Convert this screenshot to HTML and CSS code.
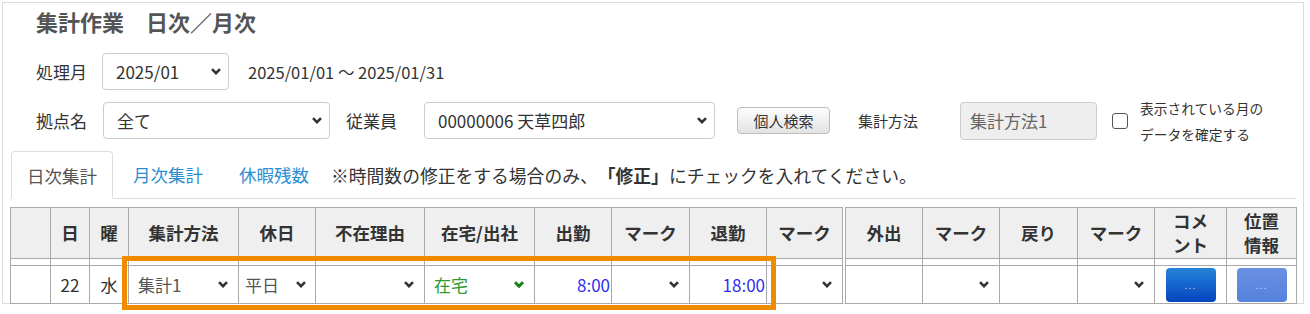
FILE: index.html
```html
<!DOCTYPE html>
<html lang="ja">

<head>
  <meta charset="UTF-8" />
  <meta name="viewport" content="width=device-width, initial-scale=1.0" />
  <title>集計作業 日次／月次</title>
  <link rel="stylesheet" href="styles.css">
</head>

<body>
  <div class="panel">

    <h1 class="page-title">集計作業　日次／月次</h1>

    <div class="form-row form-row-month">
      <span class="label label-month">処理月</span>
      <div class="select select-month">
        <span>2025/01</span>
        <svg class="chevron" viewBox="0 0 10 7"><polyline points="1,1.2 5,5.2 9,1.2" /></svg>
      </div>
      <span class="range">2025/01/01 ～ 2025/01/31</span>
    </div>

    <div class="form-row form-row-filter">
      <span class="label label-base">拠点名</span>
      <div class="select select-base">
        <span>全て</span>
        <svg class="chevron" viewBox="0 0 10 7"><polyline points="1,1.2 5,5.2 9,1.2" /></svg>
      </div>
      <span class="label label-staff">従業員</span>
      <div class="select select-staff">
        <span>00000006 天草四郎</span>
        <svg class="chevron" viewBox="0 0 10 7"><polyline points="1,1.2 5,5.2 9,1.2" /></svg>
      </div>
      <button class="search-button">個人検索</button>
      <span class="label label-method">集計方法</span>
      <div class="readonly-box">集計方法1</div>
      <span class="checkbox"></span>
      <span class="confirm-text">表示されている月の<br>データを確定する</span>
    </div>

    <div class="tabs">
      <span class="tab tab-active">日次集計</span>
      <span class="tab">月次集計</span>
      <span class="tab">休暇残数</span>
      <span class="note">※時間数の修正をする場合のみ、<b>「修正」</b>にチェックを入れてください。</span>
    </div>

    <div class="grid">
      <table class="grid-table grid-left">
        <tr class="head-row">
          <th class="w-40"></th>
          <th class="w-39">日</th>
          <th class="w-39">曜</th>
          <th class="w-110">集計方法</th>
          <th class="w-77">休日</th>
          <th class="w-109">不在理由</th>
          <th class="w-110">在宅/出社</th>
          <th class="w-77">出勤</th>
          <th class="w-78">マーク</th>
          <th class="w-77">退勤</th>
          <th class="w-76">マーク</th>
        </tr>
        <tr class="gap-row">
          <td></td><td></td><td></td><td></td><td></td><td></td><td></td><td></td><td></td><td></td><td></td>
        </tr>
        <tr class="body-row">
          <td></td>
          <td class="center">22</td>
          <td class="center">水</td>
          <td>
            <div class="cell-select">
              <span>集計1</span>
              <svg class="chevron" viewBox="0 0 10 7"><polyline points="1,1.2 5,5.2 9,1.2" /></svg>
            </div>
          </td>
          <td>
            <div class="cell-select cell-select-tight">
              <span>平日</span>
              <svg class="chevron" viewBox="0 0 10 7"><polyline points="1,1.2 5,5.2 9,1.2" /></svg>
            </div>
          </td>
          <td>
            <div class="cell-select">
              <span></span>
              <svg class="chevron" viewBox="0 0 10 7"><polyline points="1,1.2 5,5.2 9,1.2" /></svg>
            </div>
          </td>
          <td>
            <div class="cell-select cell-select-green">
              <span>在宅</span>
              <svg class="chevron" viewBox="0 0 10 7"><polyline points="1,1.2 5,5.2 9,1.2" /></svg>
            </div>
          </td>
          <td class="time">8:00</td>
          <td>
            <div class="cell-select">
              <span></span>
              <svg class="chevron" viewBox="0 0 10 7"><polyline points="1,1.2 5,5.2 9,1.2" /></svg>
            </div>
          </td>
          <td class="time">18:00</td>
          <td>
            <div class="cell-select">
              <span></span>
              <svg class="chevron" viewBox="0 0 10 7"><polyline points="1,1.2 5,5.2 9,1.2" /></svg>
            </div>
          </td>
        </tr>
      </table>

      <table class="grid-table grid-right">
        <tr class="head-row">
          <th class="w-77">外出</th>
          <th class="w-77">マーク</th>
          <th class="w-78">戻り</th>
          <th class="w-77">マーク</th>
          <th class="w-72">コメ<br>ント</th>
          <th class="w-70">位置<br>情報</th>
        </tr>
        <tr class="gap-row">
          <td></td><td></td><td></td><td></td><td></td><td></td>
        </tr>
        <tr class="body-row">
          <td></td>
          <td>
            <div class="cell-select">
              <span></span>
              <svg class="chevron" viewBox="0 0 10 7"><polyline points="1,1.2 5,5.2 9,1.2" /></svg>
            </div>
          </td>
          <td></td>
          <td>
            <div class="cell-select">
              <span></span>
              <svg class="chevron" viewBox="0 0 10 7"><polyline points="1,1.2 5,5.2 9,1.2" /></svg>
            </div>
          </td>
          <td class="button-cell"><button class="dots-button dots-comment">...</button></td>
          <td class="button-cell"><button class="dots-button dots-location">...</button></td>
        </tr>
      </table>
    </div>

    <div class="highlight"></div>

  </div>
</body>

</html>
```

FILE: styles.css
```css
/* Base Reset */
* {
  margin: 0;
  padding: 0;
  box-sizing: border-box;
}

html,
body {
  min-height: 314px;
}

body {
  background-color: #fff;
  color: #333;
  font-family: "Noto Sans CJK JP", "Noto Sans", sans-serif;
  font-size: 17px;
  padding-top: 2px;
}

/* Outer Panel */
.panel {
  position: relative;
  width: 1302px;
  height: 302px;
  margin-left: 2px;
  padding: 0 7px;
  border: 1px solid #dcdcdc;
}

.page-title {
  padding: 3px 0 0 26px;
  font-size: 22px;
  line-height: 30px;
  font-weight: bold;
  color: #555;
}

/* Form Rows */
.form-row {
  display: flex;
  align-items: center;
  height: 37px;
  padding-left: 26px;
}

.form-row-month {
  margin-top: 17px;
}

.form-row-filter {
  margin-top: 12px;
}

.label {
  flex: none;
  white-space: nowrap;
}

.label-month {
  width: 66px;
}

.label-base {
  width: 67px;
}

.label-staff {
  width: 78px;
  margin-left: 16px;
}

.label-method {
  width: 102px;
  margin-left: 28px;
  font-size: 15px;
}

.select {
  display: flex;
  align-items: center;
  justify-content: space-between;
  height: 37px;
  padding: 0 7px 0 13px;
  border: 1px solid #ccc;
  border-radius: 4px;
  background-color: #fff;
  color: #333;
}

.select-month {
  width: 127px;
}

.select-base {
  width: 227px;
}

.select-staff {
  width: 291px;
}

.chevron {
  flex: none;
  width: 10px;
  height: 7px;
  fill: none;
  stroke: #333;
  stroke-width: 2.6;
}

.range {
  margin-left: 19px;
  font-size: 16.5px;
}

.search-button {
  width: 93px;
  height: 27px;
  margin-left: 22px;
  border: 1px solid #bdbdbd;
  border-radius: 4px;
  background: linear-gradient(#fdfdfd, #e3e3e3);
  font-family: inherit;
  font-size: 15px;
  color: #333;
}

.readonly-box {
  display: flex;
  align-items: center;
  width: 137px;
  height: 38px;
  padding-left: 9px;
  border: 1px solid #ccc;
  border-radius: 4px;
  background-color: #eee;
  color: #666;
}

.checkbox {
  width: 16px;
  height: 16px;
  margin-left: 15px;
  border: 1.5px solid #555;
  border-radius: 3px;
}

.confirm-text {
  margin-left: 12px;
  font-size: 13.75px;
  line-height: 26px;
}

/* Tabs */
.tabs {
  display: flex;
  align-items: stretch;
  height: 48px;
  margin-top: 12px;
  padding-left: 1px;
  border-bottom: 1px solid #ddd;
  font-size: 17.5px;
}

.tab {
  display: flex;
  align-items: center;
  margin-right: 4px;
  padding: 0 15px 0 15px;
  border: 1px solid transparent;
  border-radius: 4px 4px 0 0;
  color: #2a8dd4;
}

.tab-active {
  margin-bottom: -1px;
  border-color: #ddd;
  border-bottom-color: #fff;
  background-color: #fff;
  color: #555;
}

.note {
  display: flex;
  align-items: center;
  margin-left: 2px;
  font-size: 17.8px;
}

/* Daily Grid */
.grid {
  display: flex;
  gap: 2px;
  margin-top: 8px;
}

.grid-table {
  border-collapse: collapse;
  table-layout: fixed;
}

.grid-left {
  width: 833px;
}

.grid-right {
  width: 452px;
}

.grid-table th,
.grid-table td {
  padding: 0;
  border: 1px solid #a9a9a9;
}

.grid-table th {
  height: 51px;
  background-color: #efefef;
  font-size: 17.5px;
  line-height: 24px;
  font-weight: bold;
  color: #333;
}

.gap-row td {
  height: 7px;
}

.body-row td {
  height: 38px;
  color: #555;
}

.w-40 { width: 40px; }
.w-39 { width: 39px; }
.w-110 { width: 110px; }
.w-109 { width: 109px; }
.w-78 { width: 78px; }
.w-77 { width: 77px; }
.w-76 { width: 76px; }
.w-72 { width: 72px; }
.w-70 { width: 70px; }

.body-row .center {
  text-align: center;
  color: #333;
}

.cell-select {
  display: flex;
  align-items: center;
  justify-content: space-between;
  height: 36px;
  padding: 0 10px 0 9px;
}

.cell-select-tight {
  padding: 0 9px 0 6px;
}

.body-row .cell-select-green {
  color: #2f9a2f;
}

.cell-select-green .chevron {
  stroke: #138013;
  stroke-width: 3;
}

.body-row .time {
  padding-right: 1px;
  text-align: right;
  color: #2f2ff0;
}

.body-row .button-cell {
  padding: 2px 0 0 0;
  vertical-align: top;
  text-align: center;
}

.dots-button {
  width: 50px;
  height: 34px;
  border: none;
  border-radius: 4px;
  font-family: "Liberation Sans", sans-serif;
  font-size: 11px;
  letter-spacing: 1px;
}

.dots-comment {
  background: linear-gradient(#2584d8, #0444c0);
  color: #b9cff5;
}

.dots-location {
  background: linear-gradient(#6890e2, #5682dc);
  color: #c8d8f5;
}

/* Annotation Frame */
.highlight {
  position: absolute;
  left: 119px;
  top: 253px;
  width: 654px;
  height: 54px;
  border: 5px solid #f08a00;
}
```
